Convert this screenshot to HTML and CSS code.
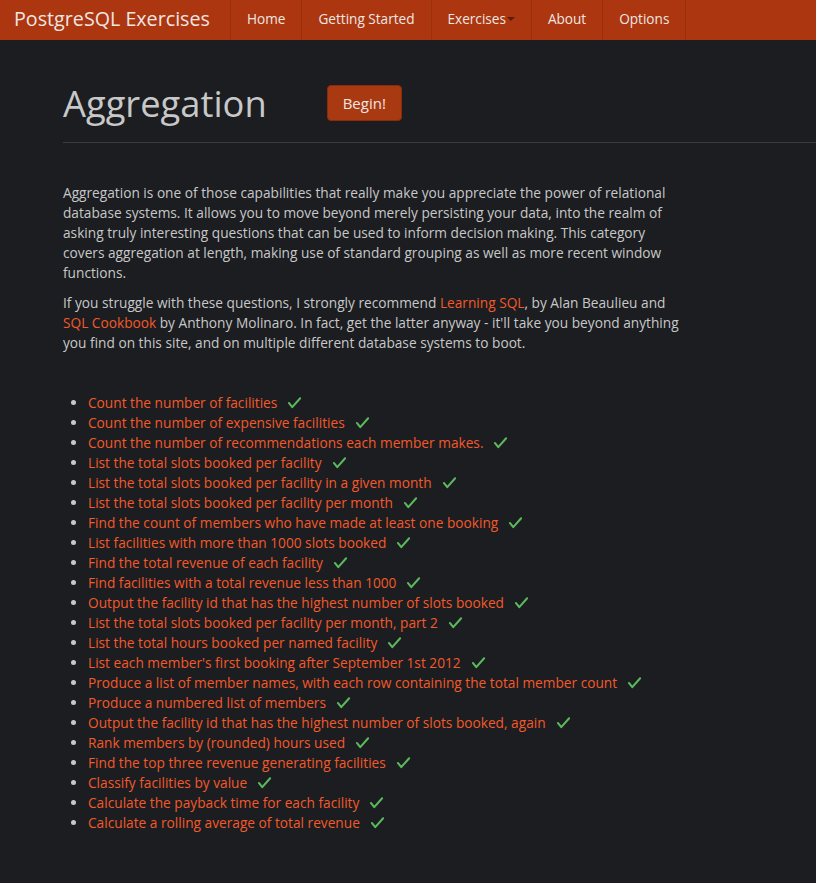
FILE: index.html
```html
<!DOCTYPE html>
<html>
<head>
<meta charset="utf-8">
<title>Aggregation - PostgreSQL Exercises</title>
<link rel="stylesheet" href="styles.css">
</head>
<body>
<nav class="navbar">
  <a class="brand" href="#">PostgreSQL Exercises</a>
  <ul class="nav">
    <li><a href="#">Home</a></li>
    <li><a href="#">Getting Started</a></li>
    <li><a href="#">Exercises<span class="caret"></span></a></li>
    <li><a href="#">About</a></li>
    <li><a href="#">Options</a></li>
  </ul>
</nav>
<main class="container">
  <header class="page-header">
    <h1>Aggregation</h1>
    <a class="btn" href="#">Begin!</a>
  </header>
  <hr class="rule">
  <section class="intro">
    <p>Aggregation is one of those capabilities that really make you appreciate the power of relational database systems. It allows you to move beyond merely persisting your data, into the realm of asking truly interesting questions that can be used to inform decision making. This category covers aggregation at length, making use of standard grouping as well as more recent window functions.</p>
    <p>If you struggle with these questions, I strongly recommend <a href="#">Learning SQL</a>, by Alan Beaulieu and <a href="#">SQL Cookbook</a> by Anthony Molinaro. In fact, get the latter anyway - it'll take you beyond anything you find on this site, and on multiple different database systems to boot.</p>
  </section>
  <ul class="exercises">
    <li><a href="#">Count the number of facilities</a><svg class="tick" viewBox="0 0 16 16"><path d="M2 8.5l3.6 4.5L14 3.5" /></svg></li>
    <li><a href="#">Count the number of expensive facilities</a><svg class="tick" viewBox="0 0 16 16"><path d="M2 8.5l3.6 4.5L14 3.5" /></svg></li>
    <li><a href="#">Count the number of recommendations each member makes.</a><svg class="tick" viewBox="0 0 16 16"><path d="M2 8.5l3.6 4.5L14 3.5" /></svg></li>
    <li><a href="#">List the total slots booked per facility</a><svg class="tick" viewBox="0 0 16 16"><path d="M2 8.5l3.6 4.5L14 3.5" /></svg></li>
    <li><a href="#">List the total slots booked per facility in a given month</a><svg class="tick" viewBox="0 0 16 16"><path d="M2 8.5l3.6 4.5L14 3.5" /></svg></li>
    <li><a href="#">List the total slots booked per facility per month</a><svg class="tick" viewBox="0 0 16 16"><path d="M2 8.5l3.6 4.5L14 3.5" /></svg></li>
    <li><a href="#">Find the count of members who have made at least one booking</a><svg class="tick" viewBox="0 0 16 16"><path d="M2 8.5l3.6 4.5L14 3.5" /></svg></li>
    <li><a href="#">List facilities with more than 1000 slots booked</a><svg class="tick" viewBox="0 0 16 16"><path d="M2 8.5l3.6 4.5L14 3.5" /></svg></li>
    <li><a href="#">Find the total revenue of each facility</a><svg class="tick" viewBox="0 0 16 16"><path d="M2 8.5l3.6 4.5L14 3.5" /></svg></li>
    <li><a href="#">Find facilities with a total revenue less than 1000</a><svg class="tick" viewBox="0 0 16 16"><path d="M2 8.5l3.6 4.5L14 3.5" /></svg></li>
    <li><a href="#">Output the facility id that has the highest number of slots booked</a><svg class="tick" viewBox="0 0 16 16"><path d="M2 8.5l3.6 4.5L14 3.5" /></svg></li>
    <li><a href="#">List the total slots booked per facility per month, part 2</a><svg class="tick" viewBox="0 0 16 16"><path d="M2 8.5l3.6 4.5L14 3.5" /></svg></li>
    <li><a href="#">List the total hours booked per named facility</a><svg class="tick" viewBox="0 0 16 16"><path d="M2 8.5l3.6 4.5L14 3.5" /></svg></li>
    <li><a href="#">List each member's first booking after September 1st 2012</a><svg class="tick" viewBox="0 0 16 16"><path d="M2 8.5l3.6 4.5L14 3.5" /></svg></li>
    <li><a href="#">Produce a list of member names, with each row containing the total member count</a><svg class="tick" viewBox="0 0 16 16"><path d="M2 8.5l3.6 4.5L14 3.5" /></svg></li>
    <li><a href="#">Produce a numbered list of members</a><svg class="tick" viewBox="0 0 16 16"><path d="M2 8.5l3.6 4.5L14 3.5" /></svg></li>
    <li><a href="#">Output the facility id that has the highest number of slots booked, again</a><svg class="tick" viewBox="0 0 16 16"><path d="M2 8.5l3.6 4.5L14 3.5" /></svg></li>
    <li><a href="#">Rank members by (rounded) hours used</a><svg class="tick" viewBox="0 0 16 16"><path d="M2 8.5l3.6 4.5L14 3.5" /></svg></li>
    <li><a href="#">Find the top three revenue generating facilities</a><svg class="tick" viewBox="0 0 16 16"><path d="M2 8.5l3.6 4.5L14 3.5" /></svg></li>
    <li><a href="#">Classify facilities by value</a><svg class="tick" viewBox="0 0 16 16"><path d="M2 8.5l3.6 4.5L14 3.5" /></svg></li>
    <li><a href="#">Calculate the payback time for each facility</a><svg class="tick" viewBox="0 0 16 16"><path d="M2 8.5l3.6 4.5L14 3.5" /></svg></li>
    <li><a href="#">Calculate a rolling average of total revenue</a><svg class="tick" viewBox="0 0 16 16"><path d="M2 8.5l3.6 4.5L14 3.5" /></svg></li>
  </ul>
</main>
</body>
</html>
```
FILE: styles.css
```css
* { box-sizing: border-box; }
html, body {
  margin: 0;
  padding: 0;
  background: #1b1d20;
}
body {
  font-family: "Open Sans", "DejaVu Sans", sans-serif;
  font-size: 13.7px;
  line-height: 20px;
  color: #c8c8c8;
}
a { color: #f4592a; text-decoration: none; }

.navbar {
  height: 40px;
  background: #ab3610;
  display: flex;
  align-items: stretch;
}
.brand {
  color: #f0e6e2;
  font-size: 19.7px;
  line-height: 38px;
  padding: 0 0 0 14px;
  width: 230px;
  white-space: nowrap;
}
.nav {
  list-style: none;
  margin: 0;
  padding: 0;
  display: flex;
  border-left: 1px solid #9a2f0d;
}
.nav li {
  border-right: 1px solid #9a2f0d;
}
.nav a {
  display: block;
  color: #f0e6e2;
  font-size: 13.6px;
  line-height: 38px;
  padding: 0 16px;
}
.caret {
  display: inline-block;
  width: 0;
  height: 0;
  border-left: 4px solid transparent;
  border-right: 4px solid transparent;
  border-top: 4px solid #5c1c08;
  vertical-align: middle;
  margin-left: 1px;
  margin-top: -2px;
}

.container {
  padding: 0 0 40px 63px;
}
.page-header {
  display: flex;
  align-items: center;
  gap: 60px;
  height: 102px;
  padding-top: 24px;
}
.page-header h1 {
  margin: 0;
  font-weight: 400;
  font-size: 36.3px;
  line-height: 40px;
  color: #c8c8c8;
}
.btn {
  display: inline-block;
  background: #a93910;
  border: 1px solid #8a2c0c;
  border-radius: 4px;
  color: #f0e6e2;
  font-size: 15px;
  line-height: 34px;
  padding: 0 15px;
}
.rule {
  border: 0;
  border-top: 1px solid #3a3c40;
  margin: 0;
}
.intro {
  width: 624px;
  padding-top: 40px;
}
.intro p {
  margin: 0 0 10px;
}
.exercises {
  margin: 40px 0 0;
  padding-left: 25px;
}
.exercises li::marker { color: #c8c8c8; }
.tick {
  width: 15px;
  height: 15px;
  margin-left: 10px;
  vertical-align: -2px;
  fill: none;
  stroke: #5cb85c;
  stroke-width: 2.2;
  stroke-linecap: round;
  stroke-linejoin: round;
}
```
